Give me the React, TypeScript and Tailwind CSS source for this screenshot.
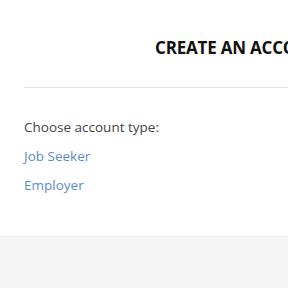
export default function App() {
  return (
    <div className="w-[288px] h-[288px] overflow-hidden bg-white" style={{ fontFamily: '"Open Sans", "Noto Sans", sans-serif' }}>
      <div className="w-[480px] h-[236px] bg-white">
        <div className="pt-[36px] flex">
          <h1 className="ml-[155px] text-[17px] leading-[24px] font-bold text-[#111] tracking-[-0.2px] whitespace-nowrap">
            CREATE AN ACCOUNT
          </h1>
        </div>
        <div className="mx-6 mt-[27px] border-t border-[#e6e6e6]" />
        <div className="px-6 pt-[30px] text-[13.5px] leading-[18px]">
          <p className="text-[#444]">Choose account type:</p>
          <p className="mt-[11px] text-[#5b8dc2]">Job Seeker</p>
          <p className="mt-[11px] text-[#5b8dc2]">Employer</p>
        </div>
      </div>
      <div className="w-full h-[52px] bg-[#f5f5f5] border-t border-[#f0f0f0]" />
    </div>
  );
}
